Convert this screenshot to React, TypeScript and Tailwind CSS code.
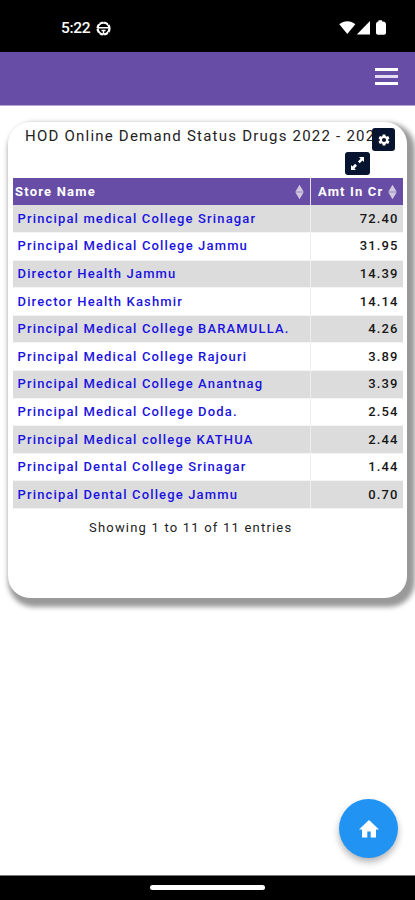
import clsx from 'clsx';

const stores = [
  { name: 'Principal medical College Srinagar', amount: '72.40' },
  { name: 'Principal Medical College Jammu', amount: '31.95' },
  { name: 'Director Health Jammu', amount: '14.39' },
  { name: 'Director Health Kashmir', amount: '14.14' },
  { name: 'Principal Medical College BARAMULLA.', amount: '4.26' },
  { name: 'Principal Medical College Rajouri', amount: '3.89' },
  { name: 'Principal Medical College Anantnag', amount: '3.39' },
  { name: 'Principal Medical College Doda.', amount: '2.54' },
  { name: 'Principal Medical college KATHUA', amount: '2.44' },
  { name: 'Principal Dental College Srinagar', amount: '1.44' },
  { name: 'Principal Dental College Jammu', amount: '0.70' },
];

function StatusBar() {
  return (
    <div className="flex h-[52px] shrink-0 items-center justify-between bg-black pt-1 pr-7 pl-[61px] text-white">
      <div className="flex items-center gap-[6px]">
        <span className="pt-[2px] text-[15.5px] leading-none font-medium tracking-[-0.3px]">5:22</span>
        <svg className="h-[15px] w-[15px]" viewBox="0 0 15 15" fill="none" stroke="currentColor">
          <circle cx="7.5" cy="7.5" r="6.3" strokeWidth="1.6" strokeDasharray="3.950 1" />
          <circle cx="7.5" cy="7.5" r="5.5" strokeWidth="1.4" />
          <path d="M2.500 6.700h10M5.500 9.500h4M7.500 9.500v3.500" strokeWidth="1.4" />
        </svg>
      </div>
      <svg className="h-4 w-12" viewBox="0 0 48 16" fill="currentColor">
        <path d="M0.3 4.3C5 .1 11.700.1 16.300 4.300L8.300 14z" />
        <path d="M31 1v13.500H17.800z" />
        <path d="M39.500 1.500V.3h3.600v1.200h.9c1.700 0 3 1.300 3 3v8.300c0 1.200-.8 2-2 2h-6c-1.200 0-2-.8-2-2V4.500c0-1.700 1.200-3 2.500-3z" />
      </svg>
    </div>
  );
}

function SortIcon() {
  return (
    <svg className="h-4 w-[9px] shrink-0" viewBox="0 0 9 16" fill="#cfc8de">
      <path d="M4.500 0.800 8.700 7.800H.3zM.3 8.200h8.400L4.500 15.200z" />
    </svg>
  );
}

function DemandTable() {
  return (
    <table className="mx-auto w-[390px] table-fixed border-collapse">
      <thead>
        <tr className="h-[27px] bg-[#684da6] text-[13px] text-white">
          <th className="w-[298px] border-r border-[#e5e0ef] p-0 pr-[6px] pl-[2.5px]">
            <div className="flex items-center justify-between font-bold tracking-[1.200px]">
              Store Name
              <SortIcon />
            </div>
          </th>
          <th className="p-0 pr-[6px] pl-[7px]">
            <div className="flex items-center justify-between font-bold tracking-[1.150px] whitespace-nowrap">
              Amt In Cr
              <SortIcon />
            </div>
          </th>
        </tr>
      </thead>
      <tbody>
        {stores.map((store, i) => (
          <tr
            key={store.name}
            className={clsx('h-[27.6px] text-[13px] leading-4', i % 2 === 0 ? 'bg-[#dcdcdc]' : 'bg-white')}
          >
            <td className="border-r border-b border-r-[#eeeeee] border-b-[#f4f4f4] p-0 pl-[5px] font-medium tracking-[1.150px] whitespace-nowrap text-[#1a12e0]">
              {store.name}
            </td>
            <td className="border-b border-b-[#f4f4f4] p-0 pr-1 text-right font-medium tracking-[1.100px] text-[#171717]">
              {store.amount}
            </td>
          </tr>
        ))}
      </tbody>
    </table>
  );
}

export default function App() {
  return (
    <div className="relative flex h-[900px] w-[415px] flex-col overflow-hidden bg-white font-['Roboto',sans-serif]">
      <StatusBar />

      <header className="flex h-[54px] shrink-0 items-center justify-end border-b border-[#b3a6d2] bg-[#684da6] pr-[17px] pb-[5px]">
        <button className="flex w-[23px] flex-col gap-[4px]" aria-label="Menu">
          <span className="h-[3px] w-full bg-white" />
          <span className="h-[3px] w-full bg-[#e4dcf4]" />
          <span className="h-[3px] w-full bg-white" />
        </button>
      </header>

      <main className="flex-1 pt-4 pl-2">
        <section className="relative h-[476px] w-[399px] rounded-[22px] bg-white shadow-[4px_5px_5px_4px_#999999]">
          <h1 className="h-14 overflow-hidden pt-[6px] pl-[17px] text-[15px] leading-4 tracking-[1.220px] whitespace-nowrap text-[#222222]">
            HOD Online Demand Status Drugs 2022 - 2023
          </h1>
          <button
            className="absolute top-[6px] right-[12px] flex h-[23px] w-[23px] items-center justify-center rounded-[3px] bg-[#06142f]"
            aria-label="Settings"
          >
            <svg className="h-[14px] w-[14px]" viewBox="0 0 24 24" fill="white">
              <path d="M19.140 12.940c.04-.3.060-.61.060-.94s-.02-.64-.07-.94l2.030-1.580a.49.49 0 0 0 .12-.61l-1.920-3.320a.49.49 0 0 0-.59-.22l-2.390.96a7 7 0 0 0-1.620-.94l-.36-2.540a.48.48 0 0 0-.48-.41h-3.840a.48.48 0 0 0-.47.41l-.36 2.540a7 7 0 0 0-1.620.94l-2.390-.96a.49.49 0 0 0-.59.22L2.740 8.870a.48.48 0 0 0 .12.61l2.030 1.580a6 6 0 0 0 0 1.880l-2.030 1.580a.49.49 0 0 0-.12.61l1.920 3.320c.12.22.37.29.59.22l2.390-.96c.5.380 1.030.7 1.620.94l.36 2.540c.05.240.24.410.48.410h3.840c.24 0 .44-.17.47-.41l.36-2.540a7 7 0 0 0 1.620-.94l2.390.96c.22.080.47 0 .59-.22l1.920-3.320a.48.48 0 0 0-.12-.61zM12 15.600a3.600 3.600 0 1 1 0-7.200 3.600 3.600 0 0 1 0 7.200z" />
            </svg>
          </button>
          <button
            className="absolute top-[30px] right-[37px] flex h-[23px] w-[25px] items-center justify-center rounded-[3px] bg-[#06142f]"
            aria-label="Expand"
          >
            <svg className="h-[15px] w-[15px]" viewBox="0 0 15 15" fill="white">
              <path d="M9 1h5v5l-1.500-1.500-2.800 2.800L7.900 5.500l2.700-2.800zM6 14H1V9l1.500 1.500 2.600-2.700 1.900 1.900-2.600 2.700z" />
            </svg>
          </button>
          <DemandTable />
          <p className="pt-[11px] pl-[81px] text-[13px] leading-4 tracking-[1.200px] text-[#222222]">
            Showing 1 to 11 of 11 entries
          </p>
        </section>
      </main>

      <button
        className="absolute right-[17px] bottom-[42px] flex h-[59px] w-[59px] items-center justify-center rounded-full bg-[#2194f3] shadow-[0_4px_7px_rgba(0,0,0,0.3)]"
        aria-label="Home"
      >
        <svg className="h-6 w-6" viewBox="0 0 24 24" fill="white">
          <path d="M10.300 20.500v-6h3.400v6H19v-8h3L12 3 2 12.500h3v8z" />
        </svg>
      </button>

      <footer className="flex h-[25px] shrink-0 justify-center border-t border-[#777777] bg-black pt-[9px]">
        <div className="h-[5px] w-[115px] rounded-full bg-white" />
      </footer>
    </div>
  );
}
